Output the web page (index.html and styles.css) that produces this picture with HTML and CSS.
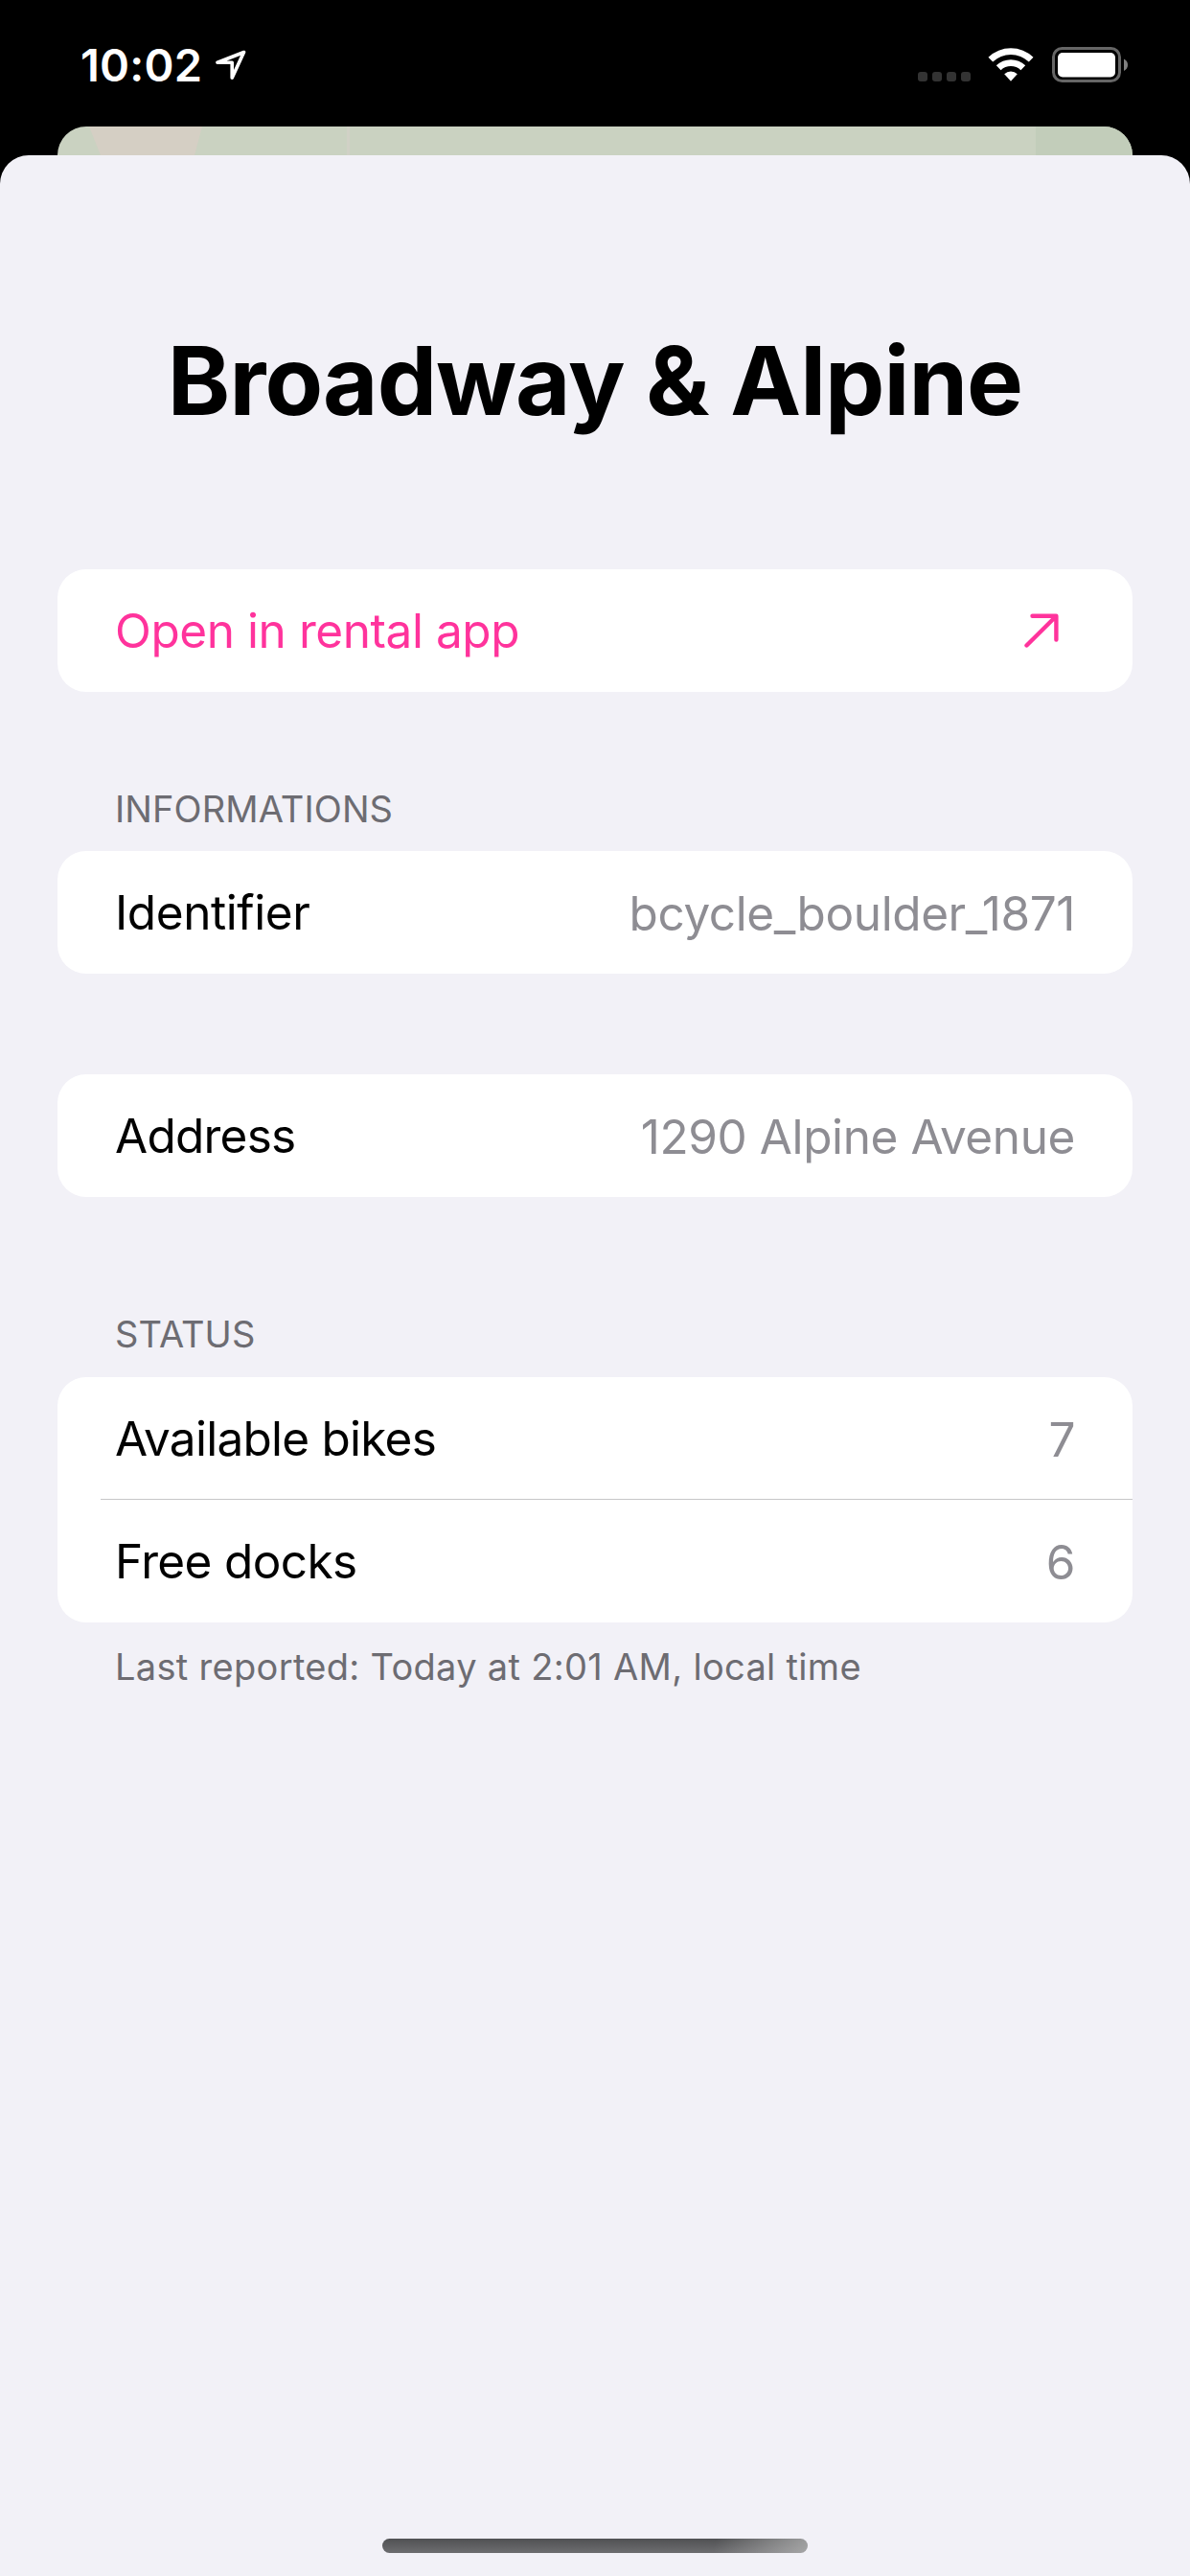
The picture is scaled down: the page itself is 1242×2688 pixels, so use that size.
FILE: index.html
```html
<!DOCTYPE html>
<html lang="en">
<head>
<meta charset="utf-8">
<title>Broadway &amp; Alpine</title>
<link rel="stylesheet" href="styles.css">
</head>
<body>
<div class="screen">
  <header class="status-bar">
    <div class="clock">
      <span class="time">10:02</span>
      <svg class="location" viewBox="0 0 34 34"><path d="M30.5 3.5 3 14.3 H18.2 V30.2 Z" fill="none" stroke="#fff" stroke-width="3.6" stroke-linejoin="round"/></svg>
    </div>
    <div class="indicators">
      <div class="signal"><i></i><i></i><i></i><i></i></div>
      <svg class="wifi" viewBox="0 0 48 36"><g fill="#fff"><path d="M0.5 10.8 A34 34 0 0 1 47.5 10.8 L42.8 15.6 A27 27 0 0 0 5.2 15.6 Z"/><path d="M8.8 19.3 A22 22 0 0 1 39.2 19.3 L34.4 24.2 A15 15 0 0 0 13.6 24.2 Z"/><path d="M17.2 28.2 A10 10 0 0 1 30.8 28.2 L24 35.8 Z"/></g></svg>
      <svg class="battery" viewBox="0 0 80 38"><rect x="1.5" y="1.5" width="69" height="34" rx="9" fill="none" stroke="#666" stroke-width="3"/><rect x="6" y="6" width="60" height="25.5" rx="5" fill="#fff"/><path d="M75 12.5 Q79 14.5 79 18.8 Q79 23 75 25 Z" fill="#808080"/></svg>
    </div>
  </header>
  <div class="map-peek">
    <svg class="map" viewBox="0 0 1122 30"><path fill="#cad2c1" d="M0 0H1122V30H0Z"/><path fill="#d5cfc4" d="M33 0H151L143 30H45Z"/><path fill="#d1d1c6" d="M302 0H305V30H302Z"/><path fill="#c2cdba" d="M1021 0H1122V30H1021Z"/></svg>
  </div>
  <main class="sheet">
    <h1 class="title">Broadway &amp; Alpine</h1>
    <section class="card">
      <a class="row link"><span class="label">Open in rental app</span>
        <svg class="arrow" viewBox="0 0 36 36"><path d="M2.5 33.5 33 3.2M8.5 2.8H33.4V27.5" fill="none" stroke="#ff339c" stroke-width="4.4" stroke-linecap="round" stroke-linejoin="round"/></svg>
      </a>
    </section>
    <h2 class="caption caption-info">INFORMATIONS</h2>
    <section class="card">
      <div class="row"><span class="label">Identifier</span><span class="value">bcycle_boulder_1871</span></div>
    </section>
    <section class="card card-address">
      <div class="row"><span class="label tight">Address</span><span class="value">1290 Alpine Avenue</span></div>
    </section>
    <h2 class="caption caption-status">STATUS</h2>
    <section class="card">
      <div class="row divided"><span class="label tight">Available bikes</span><span class="value">7</span></div>
      <div class="row"><span class="label snug">Free docks</span><span class="value">6</span></div>
    </section>
    <p class="footnote">Last reported: Today at 2:01 AM, local time</p>
    <div class="home-indicator"></div>
  </main>
</div>
</body>
</html>
```
FILE: styles.css
```css
* { box-sizing: border-box; margin: 0; padding: 0; }
body { background: #000; font-family: Inter, "Liberation Sans", sans-serif; color: #000; }
.screen { width: 1242px; height: 2688px; display: flex; flex-direction: column; overflow: hidden; }
.status-bar { height: 132px; display: flex; justify-content: space-between; padding: 0 64px 0 84px; }
.clock { display: flex; align-items: flex-start; padding-top: 38px; color: #fff; }
.time { font-size: 47px; font-weight: 600; line-height: 60px; letter-spacing: 0.2px; }
.location { width: 34px; height: 34px; margin: 13px 0 0 13px; }
.indicators { display: flex; align-items: flex-start; padding-top: 49px; }
.signal { display: flex; gap: 5px; padding: 26px 18px 0 0; }
.signal i { width: 10px; height: 10px; border-radius: 3px; background: #333; }
.wifi { width: 48px; height: 36px; margin-right: 19px; }
.battery { width: 80px; height: 38px; }
.map-peek { height: 30px; margin: 0 60px; border-radius: 30px 30px 0 0; overflow: hidden; }
.map { display: block; width: 1122px; height: 30px; }
.sheet { flex: 1; display: flex; flex-direction: column; padding: 175px 60px 0; background: #f2f1f7; border-radius: 30px 30px 0 0; }
.title { font-size: 99px; font-weight: 700; line-height: 120px; letter-spacing: -0.94px; text-align: center; white-space: nowrap; margin-bottom: 137px; }
.card { background: #fff; border-radius: 30px; overflow: hidden; flex: none; }
.row { height: 128px; display: flex; align-items: center; justify-content: space-between; padding: 0 60px; font-size: 49.5px; line-height: 60px; white-space: nowrap; }
.label { letter-spacing: -0.43px; }
.label.snug { letter-spacing: -0.62px; }
.label.tight { letter-spacing: -0.75px; }
.link { color: #ff339c; padding-right: 77px; }
.arrow { width: 36px; height: 36px; }
.value { color: #8e8d93; padding-top: 1px; letter-spacing: -0.4px; }
.divided { background: linear-gradient(#c6c6c8, #c6c6c8) 45px 127px / 100% 1px no-repeat; }
.caption { font-size: 38px; font-weight: 400; line-height: 46px; letter-spacing: 0.1px; color: #6d6c72; padding-left: 60px; }
.caption-info { margin: 99px 0 21px; }
.card-address { margin-top: 105px; }
.caption-status { margin: 120px 0 22px; }
.footnote { font-size: 38px; line-height: 46px; letter-spacing: 0.31px; color: #6d6c72; padding: 23px 60px 0; }
.home-indicator { width: 444px; height: 15px; margin: auto auto 24px; border-radius: 8px; flex: none; background: linear-gradient(100deg, transparent 78%, rgba(190,190,190,.7) 100%), linear-gradient(#505153, #6d6d70); }
```
